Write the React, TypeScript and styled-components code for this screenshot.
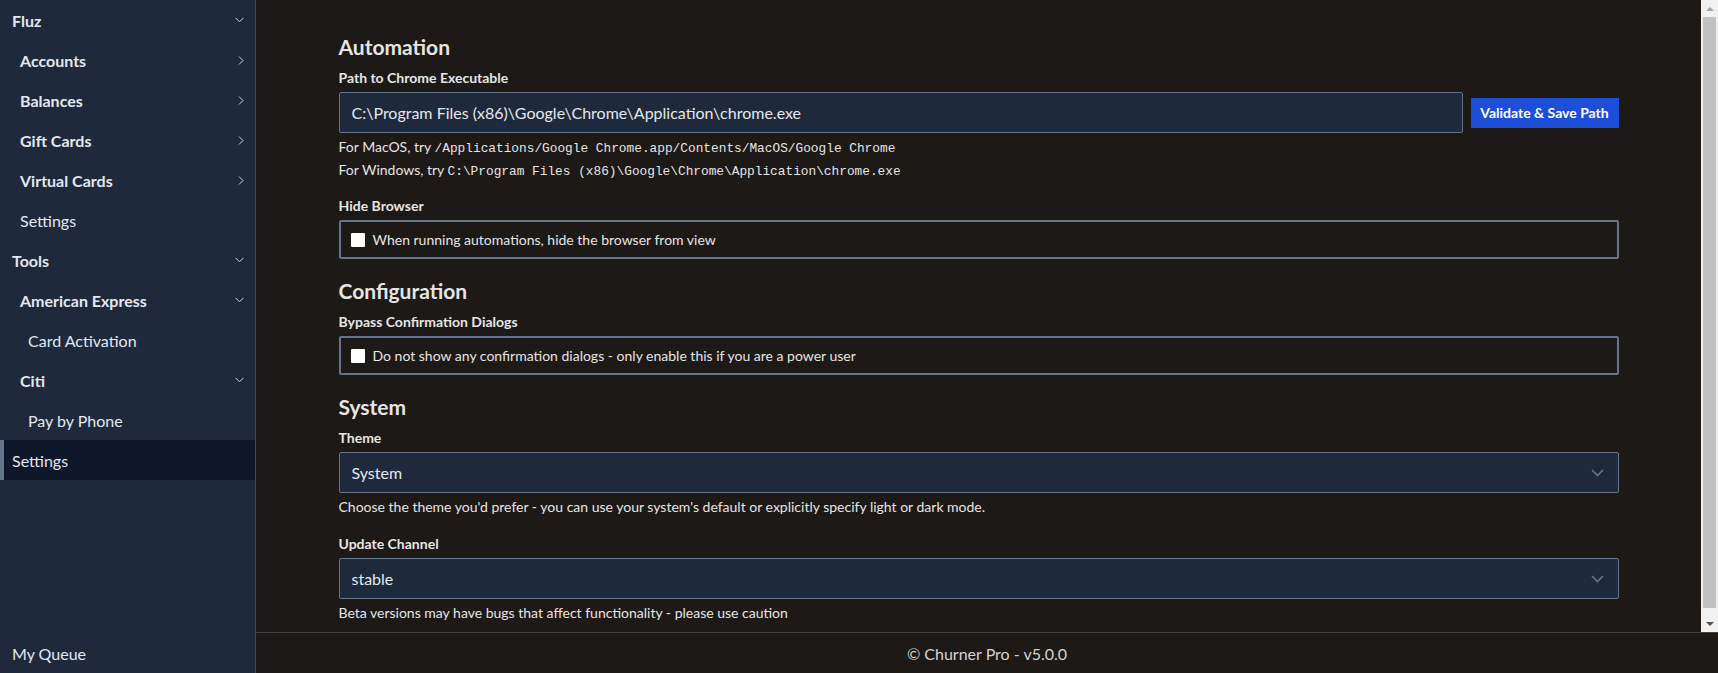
import React from 'react';
import styled, {createGlobalStyle} from "styled-components";

const GlobalStyle = createGlobalStyle`
  html, body {
    margin: 0;
    padding: 0;
    height: 100%;
    overflow: hidden;
    background: #1c1917;
    font-family: "Lato", "Noto Sans", sans-serif;
  }
  #root {
    height: 100%;
  }
  * {
    box-sizing: border-box;
  }
`

type NavItemType = {
    label: string
    level: number
    bold?: boolean
    chevron?: 'down' | 'right'
    active?: boolean
}

const navItems: NavItemType[] = [
    {label: 'Fluz', level: 0, bold: true, chevron: 'down'},
    {label: 'Accounts', level: 1, bold: true, chevron: 'right'},
    {label: 'Balances', level: 1, bold: true, chevron: 'right'},
    {label: 'Gift Cards', level: 1, bold: true, chevron: 'right'},
    {label: 'Virtual Cards', level: 1, bold: true, chevron: 'right'},
    {label: 'Settings', level: 1},
    {label: 'Tools', level: 0, bold: true, chevron: 'down'},
    {label: 'American Express', level: 1, bold: true, chevron: 'down'},
    {label: 'Card Activation', level: 2},
    {label: 'Citi', level: 1, bold: true, chevron: 'down'},
    {label: 'Pay by Phone', level: 2},
    {label: 'Settings', level: 0, active: true},
]

const Chevron = ({dir}: { dir: 'down' | 'right' }) => (
    dir === 'down'
        ? <svg width="9" height="6" viewBox="0 0 9 6"><path d="M0.5 0.8 L4.5 4.8 L8.5 0.8" fill="none" stroke="#cbd5e1" strokeWidth="1"/></svg>
        : <svg width="6" height="9" viewBox="0 0 6 9"><path d="M1 0.5 L5 4.5 L1 8.5" fill="none" stroke="#cbd5e1" strokeWidth="1"/></svg>
)

const SelectChevron = () => (
    <svg width="13" height="8" viewBox="0 0 13 8">
        <path d="M1 1 L6.5 6.5 L12 1" fill="none" stroke="#64748b" strokeWidth="1.6"/>
    </svg>
)

type SelectProps = { value: string }

const Select = (props: SelectProps) => (
    <SelectBox>
        <span>{props.value}</span>
        <SelectChevron/>
    </SelectBox>
)

type CheckProps = { text: string }

const CheckRow = (props: CheckProps) => (
    <CheckBoxFrame>
        <CheckInput type="checkbox"/>
        <span>{props.text}</span>
    </CheckBoxFrame>
)

const Scrollbar = () => (
    <ScrollTrack>
        <ScrollArrow>
            <svg width="8" height="4" viewBox="0 0 8 4"><polygon points="0,4 4,0 8,4" fill="#a3a3a3"/></svg>
        </ScrollArrow>
        <ThumbLane>
            <Thumb/>
        </ThumbLane>
        <ScrollArrow>
            <svg width="8" height="4" viewBox="0 0 8 4"><polygon points="0,0 8,0 4,4" fill="#505050"/></svg>
        </ScrollArrow>
    </ScrollTrack>
)

export default function App() {
    return (
        <>
            <GlobalStyle/>
            <Layout>
                <Sidebar>
                    <NavList>
                        {navItems.map((item, i) => (
                            <NavItem key={i} level={item.level} bold={!!item.bold} active={!!item.active}>
                                <span>{item.label}</span>
                                {item.chevron && <Chevron dir={item.chevron}/>}
                            </NavItem>
                        ))}
                    </NavList>
                    <NavItem level={0} bold={false} active={false}>
                        <span>My Queue</span>
                    </NavItem>
                </Sidebar>
                <MainColumn>
                    <Body>
                        <ScrollArea>
                            <Content>
                                <SectionTitle>Automation</SectionTitle>
                                <Field spacing={15}>
                                    <Label>Path to Chrome Executable</Label>
                                    <PathRow>
                                        <TextInput defaultValue={'C:\\Program Files (x86)\\Google\\Chrome\\Application\\chrome.exe'}/>
                                        <PrimaryButton>Validate &amp; Save Path</PrimaryButton>
                                    </PathRow>
                                    <HelpLines>
                                        <div>For MacOS, try <Code>/Applications/Google Chrome.app/Contents/MacOS/Google Chrome</Code></div>
                                        <div>For Windows, try <Code>{'C:\\Program Files (x86)\\Google\\Chrome\\Application\\chrome.exe'}</Code></div>
                                    </HelpLines>
                                </Field>
                                <Field spacing={18}>
                                    <Label>Hide Browser</Label>
                                    <CheckRow text="When running automations, hide the browser from view"/>
                                </Field>

                                <SectionTitle>Configuration</SectionTitle>
                                <Field spacing={18}>
                                    <Label>Bypass Confirmation Dialogs</Label>
                                    <CheckRow text="Do not show any confirmation dialogs - only enable this if you are a power user"/>
                                </Field>

                                <SectionTitle>System</SectionTitle>
                                <Field spacing={17}>
                                    <Label>Theme</Label>
                                    <Select value="System"/>
                                    <Help>Choose the theme you'd prefer - you can use your system's default or explicitly specify light or dark mode.</Help>
                                </Field>
                                <Field spacing={16}>
                                    <Label>Update Channel</Label>
                                    <Select value="stable"/>
                                    <Help>Beta versions may have bugs that affect functionality - please use caution</Help>
                                </Field>
                            </Content>
                        </ScrollArea>
                        <Scrollbar/>
                    </Body>
                    <Footer>© Churner Pro - v5.0.0</Footer>
                </MainColumn>
            </Layout>
        </>
    );
}

const Layout = styled.div`
  display: flex;
  height: 100vh;
  width: 100vw;
`

const Sidebar = styled.nav`
  display: flex;
  flex-direction: column;
  justify-content: space-between;
  width: 256px;
  flex-shrink: 0;
  background: #1e293b;
  border-right: 1px solid #3f4552;
`

const NavList = styled.div`
  display: flex;
  flex-direction: column;
`

const NavItem = styled.div<{ level: number, bold: boolean, active: boolean }>`
  display: flex;
  align-items: center;
  justify-content: space-between;
  height: 40px;
  padding: 0 11px 0 ${props => 12 + props.level * 8}px;
  font-size: 16px;
  font-weight: ${props => props.bold ? 700 : 400};
  color: #e2e8f0;
  background: ${props => props.active ? '#0f172a' : 'transparent'};
  box-shadow: ${props => props.active ? 'inset 4px 0 0 #64748b' : 'none'};

  svg {
    flex-shrink: 0;
  }
`

const MainColumn = styled.main`
  flex: 1;
  display: flex;
  flex-direction: column;
  min-width: 0;
`

const Body = styled.div`
  flex: 1;
  display: flex;
  min-height: 0;
`

const ScrollArea = styled.div`
  flex: 1;
  overflow: hidden;
  min-width: 0;
`

const ScrollTrack = styled.div`
  width: 17px;
  flex-shrink: 0;
  display: flex;
  flex-direction: column;
  background: #f1f1f1;
`

const ScrollArrow = styled.div`
  height: 17px;
  display: flex;
  align-items: center;
  justify-content: center;
`

const ThumbLane = styled.div`
  flex: 1;
  display: flex;
  flex-direction: column;
  padding: 0 2px 7px;
`

const Thumb = styled.div`
  flex: 1;
  background: #c1c1c1;
`

const Content = styled.div`
  max-width: 1280px;
  margin: 0 auto;
  padding: 33px 0 16px;
  display: flex;
  flex-direction: column;
  color: #e7e5e4;
`

const SectionTitle = styled.h2`
  margin: 0 0 7px;
  font-size: 21px;
  line-height: 28px;
  font-weight: 700;
  color: #e7e5e4;
`

const Field = styled.div<{ spacing: number }>`
  display: flex;
  flex-direction: column;
  margin-bottom: ${props => props.spacing}px;
`

const Label = styled.label`
  font-size: 14px;
  line-height: 20px;
  font-weight: 700;
  margin-bottom: 4px;
`

const PathRow = styled.div`
  display: flex;
  align-items: center;
  gap: 8px;
`

const TextInput = styled.input`
  flex: 1;
  height: 41px;
  padding: 0 12px;
  background: #1e293b;
  border: 1px solid #64748b;
  border-radius: 2px;
  color: #e2e8f0;
  font-family: inherit;
  font-size: 16px;
  outline: none;
`

const PrimaryButton = styled.button`
  width: 148px;
  height: 30px;
  padding: 0;
  border: none;
  background: #1d4ed8;
  color: #ffffff;
  font-family: inherit;
  font-size: 14px;
  font-weight: 700;
`

const HelpLines = styled.div`
  margin-top: 2px;
  font-size: 14px;
  line-height: 23px;
  color: #e7e5e4;

  div {
    height: 23px;
  }
`

const Code = styled.code`
  font-family: "Liberation Mono", "DejaVu Sans Mono", monospace;
  font-size: 12.8px;
  line-height: 1;
`

const Help = styled.div`
  margin-top: 4px;
  font-size: 14px;
  line-height: 20px;
  color: #e7e5e4;
`

const CheckBoxFrame = styled.div`
  display: flex;
  align-items: center;
  gap: 8px;
  height: 39px;
  padding: 0 10px;
  border: 2px solid #64748b;
  border-radius: 2px;
  font-size: 14px;
`

const CheckInput = styled.input`
  appearance: none;
  margin: 0;
  width: 14px;
  height: 14px;
  background: #ffffff;
  border-radius: 1px;
`

const SelectBox = styled.div`
  display: flex;
  align-items: center;
  justify-content: space-between;
  height: 41px;
  padding: 0 14px 0 12px;
  background: #1e293b;
  border: 1px solid #64748b;
  border-radius: 2px;
  font-size: 16px;
  color: #e2e8f0;
`

const Footer = styled.footer`
  flex-shrink: 0;
  height: 41px;
  display: flex;
  align-items: center;
  justify-content: center;
  border-top: 1px solid #44403c;
  font-size: 16px;
  color: #d6d3d1;
`
